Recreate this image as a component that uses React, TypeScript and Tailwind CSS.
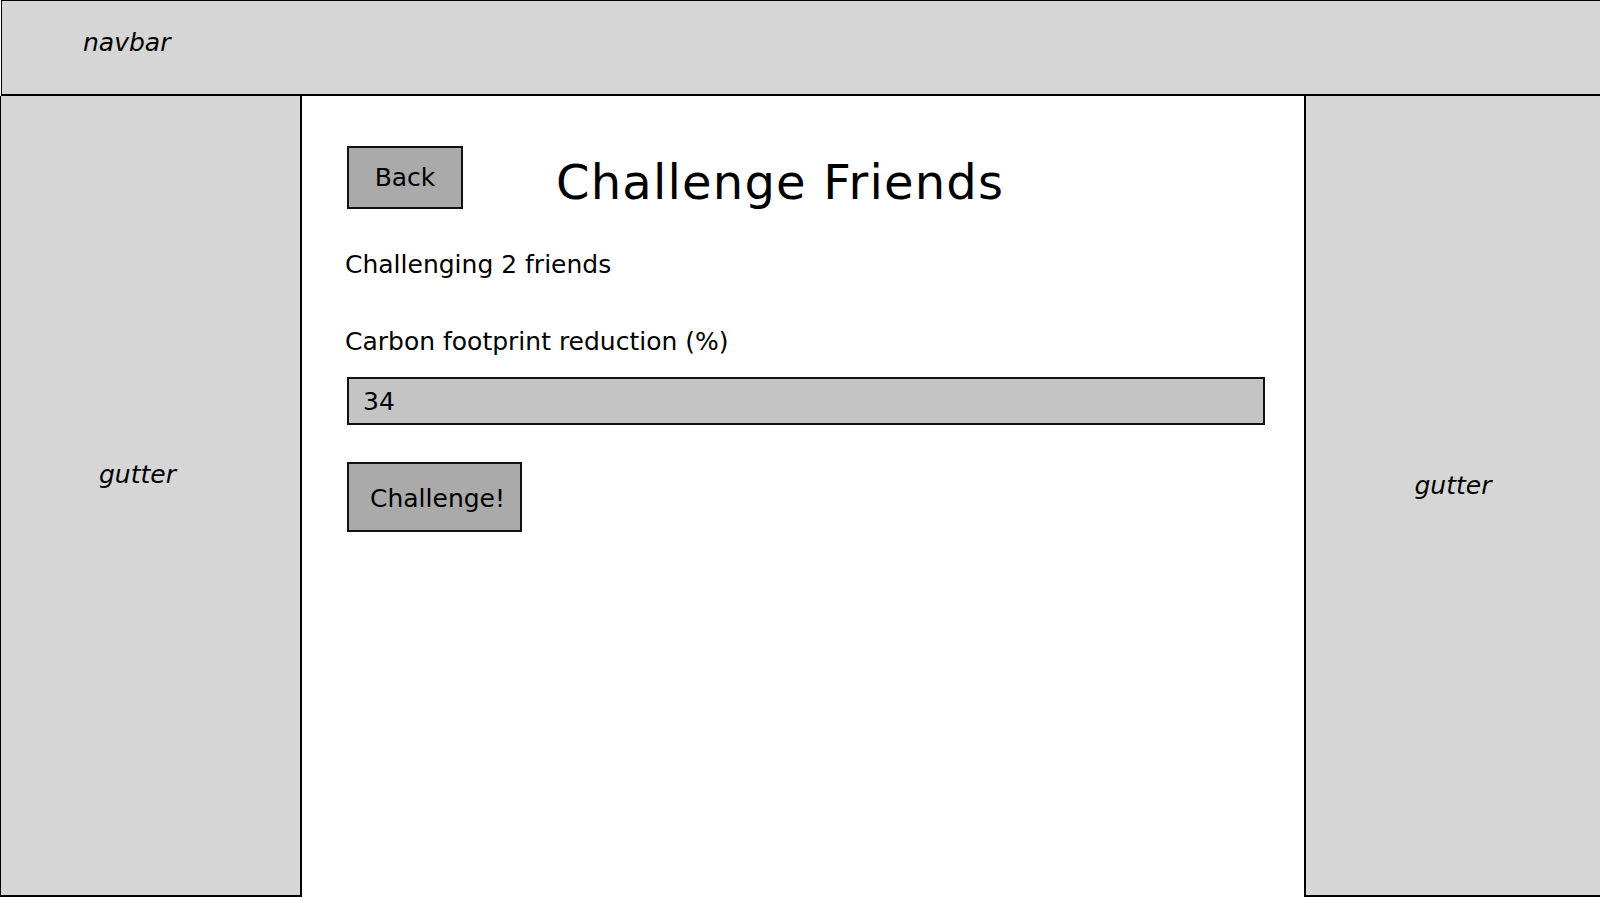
import React, { useState } from "react";

const FONT = "font-['DejaVu_Sans',sans-serif]";

const Gutter: React.FC<{ className?: string; label: string }> = ({ className = "", label }) => (
  <aside className={`bg-[#d6d6d6] ${className}`}>
    <span className="italic text-[25px] leading-[30px] text-black">{label}</span>
  </aside>
);

const App: React.FC = () => {
  const [reduction, setReduction] = useState("34");

  return (
    <div className={`${FONT} flex h-[900px] w-full flex-col overflow-hidden bg-white text-black`}>
      {/* navbar */}
      <header className="ml-px h-[96px] shrink-0 border-t border-b-2 border-l border-black bg-[#d6d6d6] pl-[81px] pt-[27px]">
        <span className="italic text-[25px] leading-[30px]">navbar</span>
      </header>

      <div className="flex h-[801px] shrink-0">
        <Gutter
          label="gutter"
          className="w-[302px] shrink-0 border-b-2 border-l border-r-2 border-black pl-[98px] pt-[364px]"
        />

        <main className="flex-1 pl-[45px] pt-[50px]">
          <div className="flex items-start">
            <button className="h-[63px] w-[116px] border-2 border-[#111] bg-[#aaaaaa] text-[25px] leading-[30px]">
              Back
            </button>
            <h1 className="ml-[93px] mt-[12px] text-[48px] font-normal leading-[48px] tracking-[1.2px]">
              Challenge Friends
            </h1>
          </div>

          <p className="-ml-[2px] mt-[41px] text-[25px] leading-[30px]">Challenging 2 friends</p>

          <label className="-ml-[2px] mt-[47px] block text-[25px] leading-[30px]" htmlFor="reduction">
            Carbon footprint reduction (%)
          </label>

          <input
            id="reduction"
            value={reduction}
            onChange={(e) => setReduction(e.target.value)}
            className="mt-[20px] block h-[48px] w-[918px] border-2 border-[#111] bg-[#c4c4c4] pl-[14px] text-[25px] leading-[30px] outline-none"
          />

          <button className="mt-[37px] flex h-[70px] w-[175px] items-center border-2 border-[#111] bg-[#aaaaaa] pl-[21px] pt-[3px] text-[25px] leading-[30px]">
            Challenge!
          </button>
        </main>

        <Gutter
          label="gutter"
          className="w-[296px] shrink-0 border-b-2 border-l-2 border-black pt-[375px] text-center"
        />
      </div>
    </div>
  );
};

export default App;
